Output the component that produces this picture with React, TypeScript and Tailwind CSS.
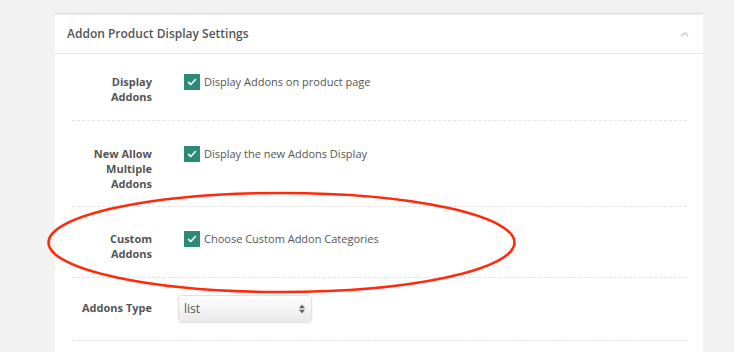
import { ChevronUp } from "lucide-react"

function Check() {
  return (
    <span className="ml-[6px] mr-[4px] flex h-4 w-4 shrink-0 items-center justify-center bg-[#2b8b77]">
      <svg viewBox="0 0 16 16" className="h-[10px] w-[10px]" fill="none">
        <path d="M2.5 8.5l3.5 3.5 7.5-8" stroke="#fff" strokeWidth="2.6" strokeLinecap="round" strokeLinejoin="round" />
      </svg>
    </span>
  )
}

function CheckRow({ label, text, pad }: { label: string[]; text: string; pad: string }) {
  return (
    <div className={`flex border-b border-dashed border-[#e3e3e3] ${pad}`}>
      <div className="w-[80px] text-right text-[11px] font-bold leading-[15px] text-[#555]">
        {label.map((l) => (
          <div key={l}>{l}</div>
        ))}
      </div>
      <div className="ml-[26px] flex items-center self-start text-[11px] text-[#555]">
        <Check />
        <span className="leading-[16px]">{text}</span>
      </div>
    </div>
  )
}

export default function App() {
  return (
    <div className="relative h-[352px] w-[734px] overflow-hidden bg-[#f2f2f2] pt-[12px] font-['Open_Sans',sans-serif]">
      <div className="ml-[55px] w-[648px] border-t-[3px] border-[#e5e8eb] bg-white">
        <div className="flex h-[39px] items-center justify-between border-b border-[#e6e6e6] pl-[12px] pr-[12px]">
          <span className="text-[12px] font-semibold text-[#555]">Addon Product Display Settings</span>
          <ChevronUp className="h-[13px] w-[13px] text-[#c9c9c9]" strokeWidth={2.5} />
        </div>
        <div className="ml-[17px] mr-[16px]">
          <CheckRow label={["Display", "Addons"]} text="Display Addons on product page" pad="pt-[20px] pb-[16px]" />
          <CheckRow label={["New Allow", "Multiple", "Addons"]} text="Display the new Addons Display" pad="pt-[25px] pb-[15px]" />
          <CheckRow label={["Custom", "Addons"]} text="Choose Custom Addon Categories" pad="pt-[24px] pb-[16px]" />
          <div className="flex items-center border-b border-dashed border-[#e3e3e3] pt-[17px] pb-[18px]">
            <div className="w-[80px] text-right text-[11px] font-bold text-[#555]">Addons Type</div>
            <div className="ml-[26px] flex h-[27px] w-[134px] items-center justify-between rounded-[4px] border border-[#e2e2e2] bg-gradient-to-b from-white to-[#e9e9e9] pl-[5px] pr-[6px] text-[12px] text-[#555] shadow-[0_1px_2px_rgba(0,0,0,0.12)]">
              <span>list</span>
              <svg viewBox="0 0 8 12" className="h-[10px] w-[6px]" fill="#666">
                <path d="M4 0L8 5H0z" />
                <path d="M4 12L8 7H0z" />
              </svg>
            </div>
          </div>
        </div>
        <div className="h-[20px]" />
      </div>
      <svg className="pointer-events-none absolute left-0 top-0" width="734" height="352">
        <ellipse cx="281.5" cy="242.5" rx="233" ry="49.5" fill="none" stroke="#ff2a0a" strokeWidth="2.6" />
      </svg>
    </div>
  )
}
